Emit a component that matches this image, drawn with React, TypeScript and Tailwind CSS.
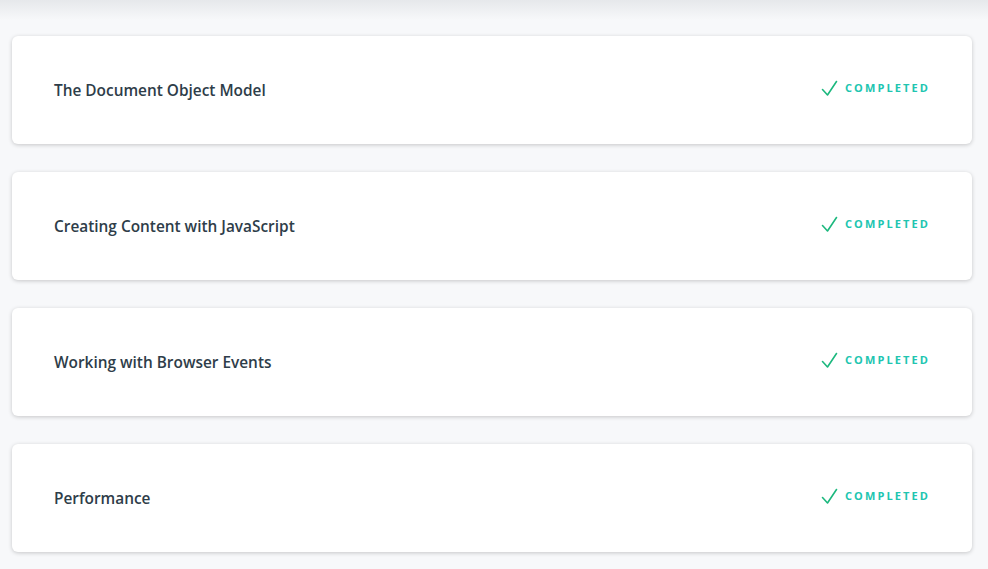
const lessons = [
  "The Document Object Model",
  "Creating Content with JavaScript",
  "Working with Browser Events",
  "Performance",
];

function Check() {
  return (
    <svg width="17" height="17" viewBox="0 0 17 17" fill="none" className="shrink-0">
      <path d="M1.5 9.5 L6.5 15 L15.5 1.5" stroke="#1cb87e" strokeWidth="1.6" strokeLinecap="round" strokeLinejoin="round" />
    </svg>
  );
}

export default function App() {
  return (
    <div className="min-h-[569px] bg-[#f7f8fa]" style={{ fontFamily: '"Open Sans", "Liberation Sans", sans-serif' }}>
      {/* header shadow */}
      <div className="h-[20px] bg-gradient-to-b from-[#e6e8eb] to-[#f7f8fa]" />
      <div className="ml-3 w-[960px] pt-4 flex flex-col gap-7">
        {lessons.map((title) => (
          <div
            key={title}
            className="h-[108px] rounded-md bg-white flex items-center justify-between px-[42px] shadow-[0_1px_4px_rgba(0,0,0,0.2)]"
          >
            <span className="mt-[2px] text-[15.4px] font-semibold text-[#2e3d49]">{title}</span>
            <div className="flex items-center gap-[7px] -mt-[3px]">
              <Check />
              <span className="text-[11px] font-bold tracking-[2.1px] text-[#20c5b0]">COMPLETED</span>
            </div>
          </div>
        ))}
      </div>
    </div>
  );
}
